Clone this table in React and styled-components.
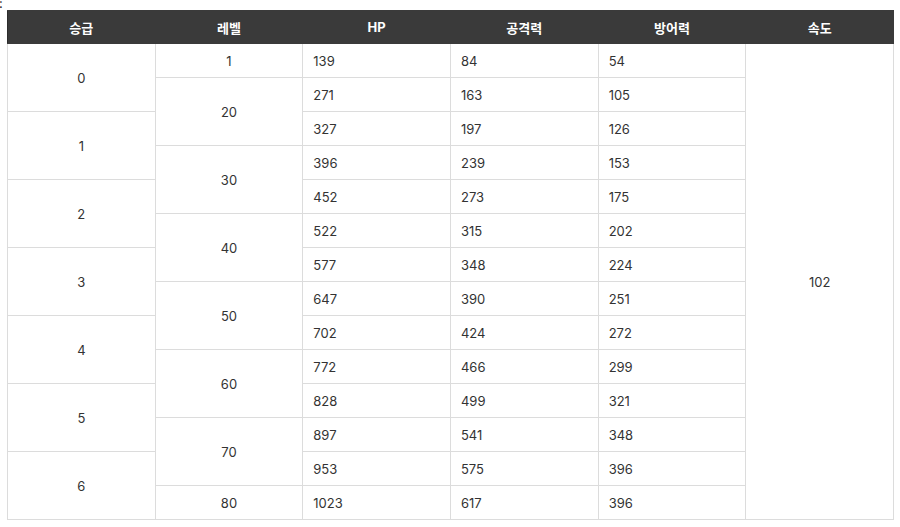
import React from 'react';
import styled, { createGlobalStyle } from 'styled-components';

const GlobalStyle = createGlobalStyle`
  body {
    margin: 0;
    background: #fff;
    font-family: 'Inter', 'Noto Sans CJK KR', sans-serif;
    color: #333;
  }
`;

const Page = styled.div`
  width: 900px;
`;

const Caption = styled.div`
  height: 10px;
  font-size: 13px;
  line-height: 6px;
  margin-left: -1px;
  color: #222;
  overflow: visible;
`;

const Table = styled.table`
  margin-left: 7px;
  width: 887px;
  border-collapse: collapse;
  table-layout: fixed;
  font-size: 13px;
`;

const HeadCell = styled.th`
  background: #3a3a3a;
  color: #fff;
  font-weight: 700;
  height: 32px;
  padding: 0;
  border: 1px solid #3a3a3a;
  border-left-color: #2c2c2c;
  text-align: center;
  font-size: 13px;
`;

const Row = styled.tr`
  height: 34px;
`;

const Cell = styled.td`
  border: 1px solid #dcdcdc;
  padding: 0 10px;
  text-align: ${p => (p.$center ? 'center' : 'left')};
  color: #333;
`;

const stats = [
  [139, 84, 54],
  [271, 163, 105],
  [327, 197, 126],
  [396, 239, 153],
  [452, 273, 175],
  [522, 315, 202],
  [577, 348, 224],
  [647, 390, 251],
  [702, 424, 272],
  [772, 466, 299],
  [828, 499, 321],
  [897, 541, 348],
  [953, 575, 396],
  [1023, 617, 396],
];

// row index -> [level, rowSpan]
const levels = { 0: [1, 1], 1: [20, 2], 3: [30, 2], 5: [40, 2], 7: [50, 2], 9: [60, 2], 11: [70, 2], 13: [80, 1] };

export default function App() {
  return (
    <Page>
      <GlobalStyle />
      <Caption>:</Caption>
      <Table>
        <thead>
          <tr>
            {['승급', '레벨', 'HP', '공격력', '방어력', '속도'].map(h => (
              <HeadCell key={h}>{h}</HeadCell>
            ))}
          </tr>
        </thead>
        <tbody>
          {stats.map((s, i) => (
            <Row key={i}>
              {i % 2 === 0 && (
                <Cell $center rowSpan={2}>{i / 2}</Cell>
              )}
              {levels[i] && (
                <Cell $center rowSpan={levels[i][1]}>{levels[i][0]}</Cell>
              )}
              <Cell>{s[0]}</Cell>
              <Cell>{s[1]}</Cell>
              <Cell>{s[2]}</Cell>
              {i === 0 && (
                <Cell $center rowSpan={14}>102</Cell>
              )}
            </Row>
          ))}
        </tbody>
      </Table>
    </Page>
  );
}
